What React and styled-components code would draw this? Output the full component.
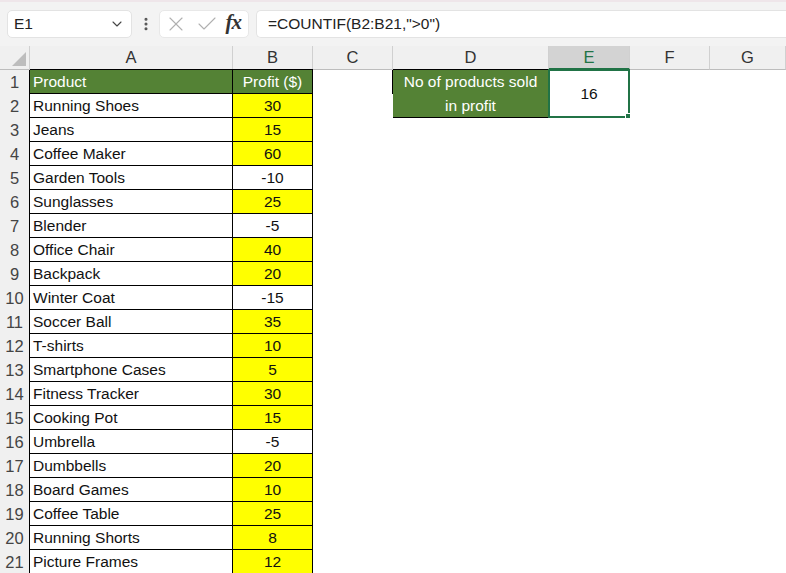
import React from 'react';
import styled, { createGlobalStyle } from 'styled-components';
import { ChevronDown, EllipsisVertical, X, Check } from 'lucide-react';

const GlobalStyle = createGlobalStyle`
  html, body {
    margin: 0;
    padding: 0;
    overflow: hidden;
    background: #ffffff;
  }
  body {
    font-family: "Liberation Sans", Arial, sans-serif;
  }
`;

const rows = [
  ['Running Shoes', 30],
  ['Jeans', 15],
  ['Coffee Maker', 60],
  ['Garden Tools', -10],
  ['Sunglasses', 25],
  ['Blender', -5],
  ['Office Chair', 40],
  ['Backpack', 20],
  ['Winter Coat', -15],
  ['Soccer Ball', 35],
  ['T-shirts', 10],
  ['Smartphone Cases', 5],
  ['Fitness Tracker', 30],
  ['Cooking Pot', 15],
  ['Umbrella', -5],
  ['Dumbbells', 20],
  ['Board Games', 10],
  ['Coffee Table', 25],
  ['Running Shorts', 8],
  ['Picture Frames', 12],
];

const GREEN = '#548235';
const SELECT = '#217346';

const Page = styled.div`
  width: 786px;
  height: 573px;
  display: flex;
  flex-direction: column;
  background: #fff;
`;

const FormulaBar = styled.div`
  flex-shrink: 0;
  height: 46px;
  box-sizing: border-box;
  background: #f3f3f3;
  border-top: 2px solid #efe6ea;
  display: flex;
  align-items: center;
  padding: 0 0 0 7px;
`;

const NameBox = styled.div`
  width: 125px;
  height: 28px;
  box-sizing: border-box;
  background: #fff;
  border: 1px solid #e3e3e3;
  border-radius: 5px;
  display: flex;
  align-items: center;
  justify-content: space-between;
  padding: 0 6px 0 6px;
  font-size: 15.5px;
  color: #222;
`;

const Dots = styled.div`
  width: 27px;
  display: flex;
  justify-content: center;
  color: #555;
`;

const FxBox = styled.div`
  width: 90px;
  height: 28px;
  box-sizing: border-box;
  background: #fff;
  border: 1px solid #e8e8e8;
  border-radius: 5px;
  display: flex;
  align-items: center;
  justify-content: space-between;
  padding: 0 4px 0 4px;
  color: #b0b0b0;
`;

const Fx = styled.span`
  font-family: "Liberation Serif", "Times New Roman", serif;
  font-style: italic;
  font-weight: bold;
  font-size: 21px;
  color: #333;
  letter-spacing: -1px;
  margin-top: -3px;
  padding-right: 3px;
`;

const FormulaInput = styled.div`
  flex: 1;
  height: 28px;
  box-sizing: border-box;
  margin-left: 7px;
  background: #fff;
  border: 1px solid #e3e3e3;
  border-right: none;
  border-radius: 5px 0 0 5px;
  display: flex;
  align-items: center;
  padding-left: 11px;
  font-size: 15.5px;
  color: #222;
`;

const Sheet = styled.div`
  flex-shrink: 0;
  display: grid;
  grid-template-columns: 30px 203px 80px 80px 156px 81px 80px 1fr;
  grid-auto-rows: 24px;
  font-size: 15.5px;
  background: #fff;
`;

const ColHead = styled.div`
  background: ${({ active }) => (active ? '#d3d3d3' : '#f0f0f0')};
  color: ${({ active }) => (active ? SELECT : '#333')};
  border-right: 1px solid #d0d0d0;
  border-bottom: ${({ active }) => (active ? `2px solid ${SELECT}` : '1px solid #bdbdbd')};
  display: flex;
  align-items: center;
  justify-content: center;
  font-size: 16.5px;
  box-sizing: border-box;
`;

const Corner = styled.div`
  background: #f0f0f0;
  border-right: 1px solid #d0d0d0;
  border-bottom: 1px solid #bdbdbd;
  box-sizing: border-box;
  display: flex;
  align-items: flex-end;
  justify-content: flex-end;
  padding: 0 3px 3px 0;
`;

const RowHead = styled.div`
  background: #f0f0f0;
  color: #444;
  border-right: 1px solid #bdbdbd;
  box-sizing: border-box;
  display: flex;
  align-items: center;
  justify-content: center;
  font-size: 16.5px;
`;

const Cell = styled.div`
  position: relative;
  box-sizing: border-box;
  background: ${({ bg }) => bg || '#fff'};
  color: ${({ light }) => (light ? '#fff' : '#111')};
  border-right: 1px solid ${({ edged }) => (edged ? '#000' : 'transparent')};
  border-bottom: 1px solid ${({ edged }) => (edged ? '#000' : 'transparent')};
  box-shadow: ${({ edged }) => (edged ? '-1px 0 0 #000, 0 -1px 0 #000' : 'none')};
  display: flex;
  align-items: center;
  justify-content: ${({ align }) => (align === 'center' ? 'center' : 'flex-start')};
  padding: 0 3px;
  white-space: nowrap;
  grid-row: ${({ span }) => (span ? `span ${span}` : 'auto')};
`;

const Wrapped = styled.div`
  white-space: normal;
  text-align: center;
  line-height: 24px;
  width: 100%;
  padding: 0 2px;
`;

const Selection = styled.div`
  position: absolute;
  left: -1px;
  top: -1px;
  right: -1px;
  bottom: -1px;
  border: 2px solid ${SELECT};
  pointer-events: none;
`;

const FillHandle = styled.div`
  position: absolute;
  right: -4px;
  bottom: -4px;
  width: 6px;
  height: 6px;
  background: ${SELECT};
  border: 1px solid #fff;
`;

const cols = ['A', 'B', 'C', 'D', 'E', 'F', 'G'];

export default function App() {
  return (
    <Page>
      <GlobalStyle />
      <FormulaBar>
        <NameBox>
          <span>E1</span>
          <ChevronDown size={16} strokeWidth={1.6} color="#444" />
        </NameBox>
        <Dots>
          <EllipsisVertical size={16} strokeWidth={2.6} />
        </Dots>
        <FxBox>
          <X size={24} strokeWidth={1.1} />
          <Check size={24} strokeWidth={1.1} />
          <Fx>fx</Fx>
        </FxBox>
        <FormulaInput>=COUNTIF(B2:B21,"&gt;0")</FormulaInput>
      </FormulaBar>

      <Sheet>
        <Corner>
          <svg width="14" height="14" viewBox="0 0 14 14">
            <polygon points="14,0 14,14 0,14" fill="#bdbdbd" />
          </svg>
        </Corner>
        {cols.map((c) => (
          <ColHead key={c} active={c === 'E'}>{c}</ColHead>
        ))}

        <RowHead>1</RowHead>
        <Cell edged bg={GREEN} light>Product</Cell>
        <Cell edged bg={GREEN} light align="center">Profit ($)</Cell>
        <Cell />
        <Cell edged bg={GREEN} light span={2}>
          <Wrapped>No of products sold in profit</Wrapped>
        </Cell>
        <Cell span={2} align="center">
          16
          <Selection />
          <FillHandle />
        </Cell>
        <Cell />
        <Cell />

        {rows.map(([name, value], i) => {
          const n = i + 2;
          return (
            <React.Fragment key={n}>
              <RowHead>{n}</RowHead>
              <Cell edged>{name}</Cell>
              <Cell edged align="center" bg={value > 0 ? '#ffff00' : '#fff'}>{value}</Cell>
              <Cell />
              {n !== 2 && <Cell />}
              {n !== 2 && <Cell />}
              <Cell />
              <Cell />
            </React.Fragment>
          );
        })}
      </Sheet>
    </Page>
  );
}
